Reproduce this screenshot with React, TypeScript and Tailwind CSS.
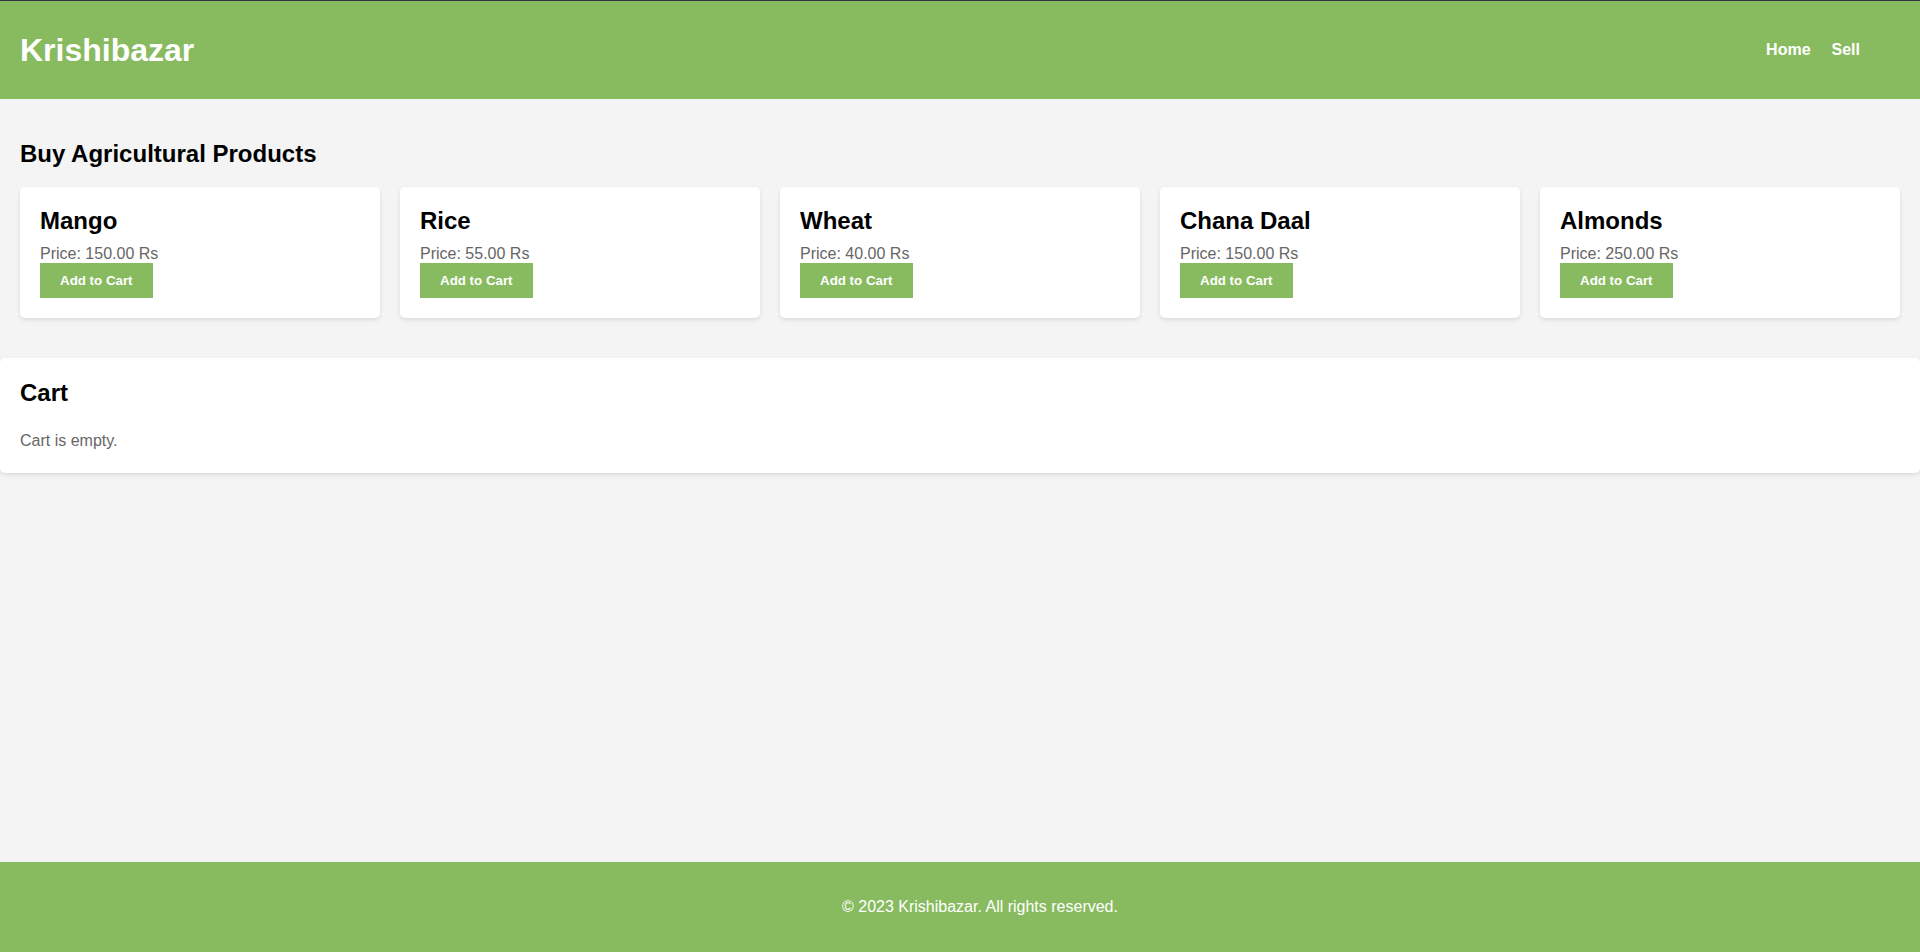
import React from 'react';

const products = [
  { name: 'Mango', price: 150 },
  { name: 'Rice', price: 55 },
  { name: 'Wheat', price: 40 },
  { name: 'Chana Daal', price: 150 },
  { name: 'Almonds', price: 250 },
];

const font = { fontFamily: '"Liberation Sans", Arial, sans-serif' };

function ProductCard({ name, price }: { name: string; price: number }) {
  return (
    <div className="bg-white rounded-[5px] shadow-[0_2px_4px_rgba(0,0,0,0.1)] p-5">
      <h3 className="text-[24px] font-bold leading-[1.15] text-black">{name}</h3>
      <p className="mt-[11px] text-base leading-[1.15] text-[#666]">Price: {price.toFixed(2)} Rs</p>
      <button className="-mt-px bg-[#88bb5f] text-white font-bold text-[13.33px] leading-[15px] px-5 py-[10px]">
        Add to Cart
      </button>
    </div>
  );
}

export default function App() {
  return (
    <div className="min-h-screen flex flex-col bg-[#f4f4f4]" style={font}>
      {/* Header */}
      <header className="h-[99px] bg-[#88bb5f] border-t border-[#2f3440] flex items-center justify-between px-5">
        <h1 className="text-[32px] font-bold leading-[1.15] text-white">Krishibazar</h1>
        <nav className="flex gap-[21px] pr-[40px]">
          <a className="text-white font-bold text-base">Home</a>
          <a className="text-white font-bold text-base">Sell</a>
        </nav>
      </header>

      {/* Products */}
      <main className="px-5 pt-[41px] pb-5">
        <h2 className="text-[24px] font-bold leading-[1.15] text-black mb-[19px]">Buy Agricultural Products</h2>
        <div className="grid grid-cols-5 gap-5">
          {products.map((p) => (
            <ProductCard key={p.name} name={p.name} price={p.price} />
          ))}
        </div>
      </main>

      {/* Cart */}
      <section className="mt-5 bg-white rounded-[5px] shadow-[0_2px_4px_rgba(0,0,0,0.1)] px-5 pt-[21px] pb-[22px]">
        <h2 className="text-[24px] font-bold leading-[1.15] text-black mb-[26px]">Cart</h2>
        <p className="text-base leading-[1.15] text-[#666]">Cart is empty.</p>
      </section>

      <div className="flex-1" />

      {/* Footer */}
      <footer className="h-[90px] bg-[#88bb5f] flex justify-center pt-[36px] pl-10">
        <p className="text-white text-base leading-[1.15]">© 2023 Krishibazar. All rights reserved.</p>
      </footer>
    </div>
  );
}
